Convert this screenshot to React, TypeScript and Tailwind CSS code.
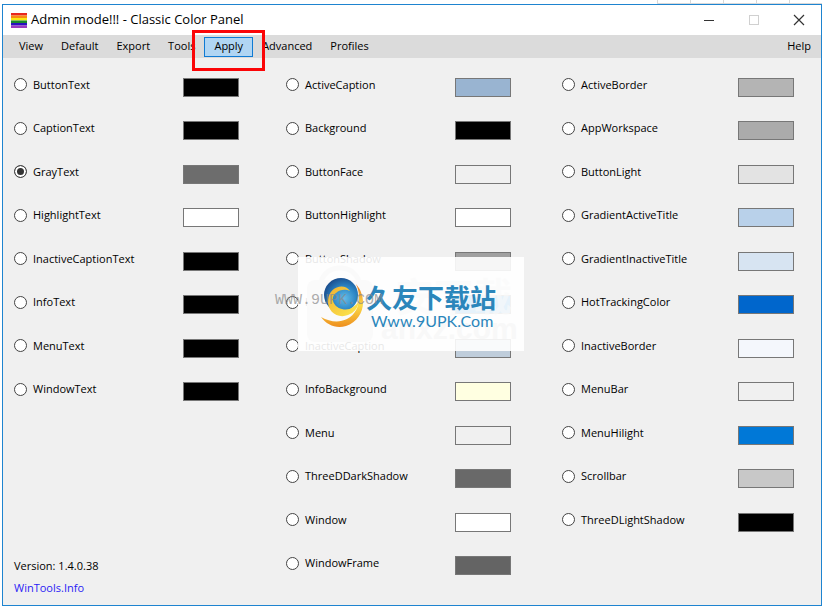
import { useState } from 'react';

type Swatch = { name: string; color: string; hex: string };

const textColors: Swatch[] = [
  { name: 'ButtonText', color: 'bg-black', hex: '#000000' },
  { name: 'CaptionText', color: 'bg-black', hex: '#000000' },
  { name: 'GrayText', color: 'bg-[#6d6d6d]', hex: '#6d6d6d' },
  { name: 'HighlightText', color: 'bg-white', hex: '#ffffff' },
  { name: 'InactiveCaptionText', color: 'bg-black', hex: '#000000' },
  { name: 'InfoText', color: 'bg-black', hex: '#000000' },
  { name: 'MenuText', color: 'bg-black', hex: '#000000' },
  { name: 'WindowText', color: 'bg-black', hex: '#000000' },
];

const surfaceColors: Swatch[] = [
  { name: 'ActiveCaption', color: 'bg-[#99b4d1]', hex: '#99b4d1' },
  { name: 'Background', color: 'bg-black', hex: '#000000' },
  { name: 'ButtonFace', color: 'bg-[#f0f0f0]', hex: '#f0f0f0' },
  { name: 'ButtonHighlight', color: 'bg-white', hex: '#ffffff' },
  { name: 'ButtonShadow', color: 'bg-[#a0a0a0]', hex: '#a0a0a0' },
  { name: 'Highlight', color: 'bg-[#0078d7]', hex: '#0078d7' },
  { name: 'InactiveCaption', color: 'bg-[#bfcddb]', hex: '#bfcddb' },
  { name: 'InfoBackground', color: 'bg-[#ffffe1]', hex: '#ffffe1' },
  { name: 'Menu', color: 'bg-[#f0f0f0]', hex: '#f0f0f0' },
  { name: 'ThreeDDarkShadow', color: 'bg-[#696969]', hex: '#696969' },
  { name: 'Window', color: 'bg-white', hex: '#ffffff' },
  { name: 'WindowFrame', color: 'bg-[#646464]', hex: '#646464' },
];

const borderColors: Swatch[] = [
  { name: 'ActiveBorder', color: 'bg-[#b4b4b4]', hex: '#b4b4b4' },
  { name: 'AppWorkspace', color: 'bg-[#ababab]', hex: '#ababab' },
  { name: 'ButtonLight', color: 'bg-[#e3e3e3]', hex: '#e3e3e3' },
  { name: 'GradientActiveTitle', color: 'bg-[#b9d1ea]', hex: '#b9d1ea' },
  { name: 'GradientInactiveTitle', color: 'bg-[#d7e4f2]', hex: '#d7e4f2' },
  { name: 'HotTrackingColor', color: 'bg-[#0066cc]', hex: '#0066cc' },
  { name: 'InactiveBorder', color: 'bg-[#f4f7fc]', hex: '#f4f7fc' },
  { name: 'MenuBar', color: 'bg-[#f0f0f0]', hex: '#f0f0f0' },
  { name: 'MenuHilight', color: 'bg-[#0078d7]', hex: '#0078d7' },
  { name: 'Scrollbar', color: 'bg-[#c8c8c8]', hex: '#c8c8c8' },
  { name: 'ThreeDLightShadow', color: 'bg-black', hex: '#000000' },
];

const flag = ['#e8281e', '#f98a14', '#f9e814', '#1c8a2c', '#2a10c0', '#9a3ac0'];

export default function App() {
  const [selected, setSelected] = useState('GrayText');

  return (
    <div className="flex min-h-screen flex-col bg-white pr-px pb-[2px] pl-[2px] font-['Open_Sans','Noto_Sans',sans-serif] text-[11px] text-black">
      <div className="flex h-1 justify-end">
        {[0, 1, 2, 3, 4].map((i) => (
          <div key={i} className="w-[33px] border-b border-l border-[#d8d8d8]" />
        ))}
      </div>

      <div className="relative flex flex-1 flex-col border border-[#1e84d0] bg-[#f0f0f0]">
        <TitleBar />
        <MenuBar />
        <main className="grid flex-1 grid-cols-[272px_276px_1fr] pt-[5px] pb-5">
          <Column items={textColors} selected={selected} onSelect={setSelected}>
            <footer className="row-start-12 mt-[13px] flex h-0 flex-col items-start pl-[11px] leading-[22px]">
              <span>Version: 1.4.0.38</span>
              <a href="#wintools" className="text-[#2a1cf5]">WinTools.Info</a>
            </footer>
          </Column>
          <Column items={surfaceColors} selected={selected} onSelect={setSelected} />
          <Column items={borderColors} selected={selected} onSelect={setSelected} wide />
        </main>
        <Watermark />
      </div>
    </div>
  );
}

function TitleBar() {
  return (
    <header className="flex h-[30px] items-center bg-white pl-2">
      <svg className="h-[15px] w-4" viewBox="0 0 16 15" preserveAspectRatio="none">
        {flag.map((c, i) => (
          <rect key={c} y={i * 2.5} width="16" height="2.5" fill={c} />
        ))}
      </svg>
      <h1 className="ml-1 flex-1 text-[13px]">Admin mode!!! - Classic Color Panel</h1>
      <button aria-label="Minimize" className="flex h-full w-[45px] items-center justify-center">
        <svg className="h-3 w-3" viewBox="0 0 12 12"><path d="M1 6.5h10" stroke="#333" /></svg>
      </button>
      <button aria-label="Maximize" disabled className="flex h-full w-[45px] items-center justify-center">
        <svg className="h-3 w-3" viewBox="0 0 12 12"><rect x="1.5" y="1.5" width="9" height="9" fill="none" stroke="#d0d0d0" /></svg>
      </button>
      <button aria-label="Close" className="flex h-full w-[45px] items-center justify-center">
        <svg className="h-3 w-3" viewBox="0 0 12 12"><path d="M1 1l10 10M11 1L1 11" stroke="#333" strokeWidth="1.2" /></svg>
      </button>
    </header>
  );
}

function MenuBar() {
  return (
    <nav className="flex h-[23px] items-center bg-[#dbdbdb] pr-[1px] pl-[7px]">
      <MenuItem label="View" />
      <MenuItem label="Default" />
      <MenuItem label="Export" />
      <MenuItem label="Tools" />
      <div className="relative">
        <button className="block h-5 border border-[#0f7ad3] bg-[#b0d5f3] px-[9px]">Apply</button>
        {/* highlight frame around Apply */}
        <div className="pointer-events-none absolute -inset-x-3 -top-[7px] -bottom-[14px] z-10 border-[3px] border-[#fb0507]" />
      </div>
      <MenuItem label="Advanced" />
      <MenuItem label="Profiles" />
      <div className="flex-1" />
      <MenuItem label="Help" />
    </nav>
  );
}

function MenuItem({ label }: { label: string }) {
  return <button className="h-5 px-[9px]">{label}</button>;
}

function Column({ items, selected, onSelect, wide, children }: any) {
  return (
    <section className="grid grid-rows-12">
      {items.map((item: Swatch) => (
        <div key={item.name} className="flex items-center">
          <label className={wide ? 'flex w-[187px] items-center pl-[11px]' : 'flex w-[180px] items-center pl-[11px]'}>
            <input
              type="radio"
              name="color"
              checked={selected === item.name}
              onChange={() => onSelect(item.name)}
              className="h-[13px] w-[13px] appearance-none rounded-full border border-[#444] bg-white checked:bg-[#333] checked:shadow-[inset_0_0_0_2px_white]"
            />
            <span className="ml-[6px]">{item.name}</span>
          </label>
          <button aria-label={`${item.name} ${item.hex}`} className={`mt-[5px] h-[19px] w-14 border border-[#777] ${item.color}`} />
        </div>
      ))}
      {children}
    </section>
  );
}

function Watermark() {
  return (
    <div className="pointer-events-none absolute top-[252px] left-[272px] h-[94px] w-[249px]">
      <div className="absolute inset-y-0 right-0 left-[23px] bg-white/90" />
      {/* faint bag and site name behind the logo */}
      <svg className="absolute top-2 left-8 h-[78px] w-[66px]" viewBox="0 0 66 78">
        <rect y="15" width="66" height="62" rx="8" fill="#fafafa" />
        <path d="M14 18c3-20 35-20 38 0" fill="none" stroke="#fafafa" strokeWidth="5" />
      </svg>
      <span className="absolute top-[17px] left-[120px] font-['Noto_Sans_CJK_SC',sans-serif] text-[39px] leading-10 font-bold whitespace-nowrap text-[#fafafa]/60">安下载</span>
      <span className="absolute top-[54px] left-[106px] font-['Liberation_Sans',sans-serif] text-3xl leading-9 font-bold whitespace-nowrap text-[#f8f8f8]">anxz.com</span>
      <svg className="absolute top-5 left-[46px] h-[52px] w-[44px]" viewBox="0 0 44 52">
        <defs>
          <radialGradient id="globe" cx="0.6" cy="0.6" r="0.65">
            <stop offset="0" stopColor="#62bce8" />
            <stop offset="0.55" stopColor="#2a84c4" />
            <stop offset="1" stopColor="#1a4a8a" />
          </radialGradient>
          <linearGradient id="swoosh" x1="0" y1="0" x2="0" y2="1">
            <stop offset="0" stopColor="#e87820" />
            <stop offset="0.5" stopColor="#fbdc48" />
            <stop offset="1" stopColor="#ee8e1e" />
          </linearGradient>
          <linearGradient id="crescent" x1="0" y1="0" x2="1" y2="1">
            <stop offset="0" stopColor="#f0b030" />
            <stop offset="1" stopColor="#fdea50" />
          </linearGradient>
        </defs>
        <circle cx="20" cy="18" r="17" fill="url(#globe)" />
        <path d="M29 14C23 5 8 10 7 23C6 35 17 42 27 38C33 36 37 31 38 24C34 30 28 34 21 32C12 30 9 20 15 16C19 12 25 12 29 14z" fill="url(#crescent)" />
        <path d="M35 7C48 22 42 44 25 49C15 52 6 48 0 40C9 45 18 46 26 42C38 36 41 20 35 7z" fill="url(#swoosh)" />
      </svg>
      <span className="absolute top-[24px] left-[91px] font-['Noto_Sans_CJK_SC',sans-serif] text-[26px] leading-8 font-bold whitespace-nowrap text-[#2b86bb]">久友下载站</span>
      <span className="absolute top-[54px] left-[96px] font-['Lato',sans-serif] text-base leading-5 whitespace-nowrap text-[#2b86bb]">Www.9UPK.Com</span>
      <span className="absolute top-[36px] left-0 font-['Liberation_Mono',monospace] text-[15px] leading-4 whitespace-nowrap text-[#888]/70">WWW.9UPK.COM</span>
    </div>
  );
}
